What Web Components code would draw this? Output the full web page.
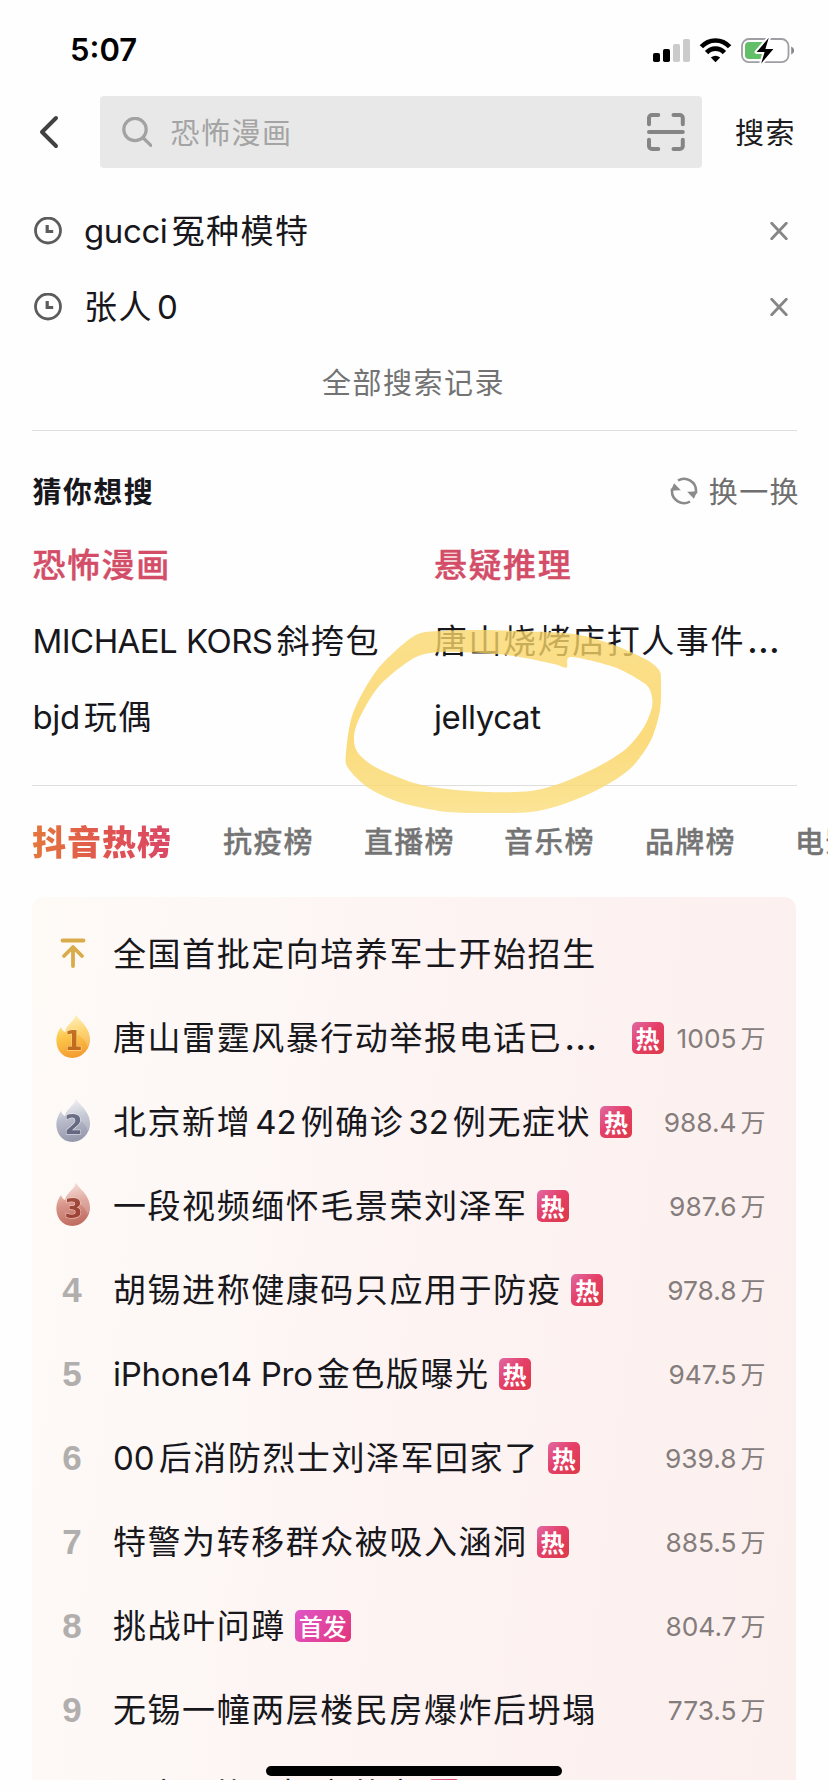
<!DOCTYPE html>
<html lang="zh-CN">
<head>
<meta charset="utf-8">
<title>搜索</title>
<style>
html,body{margin:0;padding:0}
body{width:828px;height:1792px;overflow:hidden;background:#fefefe;color:#17171c;font-family:Inter,"Noto Sans CJK SC",sans-serif}
</style>
</head>
<body>
<search-app></search-app>
<script>
const el = (name, html, setup) => customElements.define(name, class extends HTMLElement {
  constructor(){
    super();
    this.attachShadow({mode:'open'});
  }
  connectedCallback(){
    this.shadowRoot.innerHTML = typeof html === 'function' ? html(this) : html;
    if (setup) setup(this);
  }
});

/* Mixed-script line: Latin runs get their own tracking (attribute "track"). */
el('mixed-text', h => {
  const tracks = (h.getAttribute('track') || '0').split(',');
  let i = 0;
  const runs = h.getAttribute('text').match(/[\x20-\x7e…]+|[^\x20-\x7e…]+/g).map(r => {
    if (!/[\x20-\x7e…]/.test(r)) return `<span>${r}</span>`;
    const t = tracks[Math.min(i++, tracks.length - 1)];
    return `<span class="l ${r === '…' ? 'dots' : ''}" style="letter-spacing:${t}px">${r}</span>`;
  }).join('');
  return `<style>
    :host{display:block;white-space:nowrap;font-size:33px;line-height:48px;letter-spacing:1.550px}
    .l{font-size:var(--latin,33px);line-height:1}
    span+.l{margin-left:var(--gap,4px)} .l+span{margin-left:var(--gap,4px)}
    span+.dots{margin-left:2px;font-size:38px}
  </style>${runs}`;
});

el('status-bar', `<style>
  :host{display:flex;height:96px;box-sizing:border-box;padding:0 34px 0 70px;align-items:center;justify-content:space-between}
  b{font:600 31px/40px Inter;letter-spacing:0;margin-top:3px;color:#000}
  svg{display:block;margin-top:3px}
</style>
<b>5:07</b>
<svg width="142" height="30" viewBox="652 34 142 30">
  <rect x="653" y="52" width="7" height="9" rx="1.800"/>
  <rect x="663" y="48" width="7" height="13" rx="1.800"/>
  <rect x="673" y="43" width="7" height="18" rx="1.800" fill="#cbcbcb"/>
  <rect x="683" y="38" width="7" height="23" rx="1.800" fill="#cbcbcb"/>
  <g fill="none" stroke="#000" stroke-width="4.600">
    <path d="M701.400 45.800a18.800 18.800 0 0 1 28.200 0"/><path d="M706.600 51.600a12 12 0 0 1 17.800 0"/>
  </g>
  <path d="M710.800 56.600q4.700-3.800 9.400 0l-4.700 4.600z"/>
  <rect x="742" y="38" width="46.500" height="23.200" rx="7" fill="#fff" stroke="#9f9ea2" stroke-width="1.800"/>
  <path d="M749 41h15v17h-15a4 4 0 0 1-4-4v-9a4 4 0 0 1 4-4z" fill="#62bf67"/>
  <path d="M791.200 45.600q3 1.400 3 4t-3 4z" fill="#88878b"/>
  <path d="M768.800 36.800L756.600 51h8l-3.400 11.500L773.400 48h-8z" stroke="#fff" stroke-width="4" paint-order="stroke" stroke-linejoin="round"/>
</svg>`);

el('search-bar', `<style>
  :host{display:flex;height:72px;align-items:center}
  .back{width:100px;flex:none}
  .box{width:602px;height:72px;border-radius:4px;background:#e8e8e8;display:flex;align-items:center;box-sizing:border-box;padding:0 16px 0 22px}
  .q{flex:1;margin:-2px 0 0 18.500px;font-size:29px;letter-spacing:1.500px;color:#a4a4a4}
  .go{margin:-2px 0 0 33px;font-size:29px;letter-spacing:1.400px;color:#1b1b20}
  svg{display:block}
</style>
<svg class="back" height="72" viewBox="0 96 100 72" fill="none" stroke="#414141" stroke-width="4" stroke-linecap="round" stroke-linejoin="round"><path d="M56 118L42 132l14 14"/></svg>
<div class="box">
  <svg width="30" height="31" viewBox="122 117 30 31" fill="none" stroke="#a2a2a2" stroke-width="3.200" stroke-linecap="round"><circle cx="135" cy="129.500" r="11.200"/><path d="M143.300 138l7.500 7.300"/></svg>
  <span class="q">恐怖漫画</span>
  <svg width="40" height="40" viewBox="646 112 40 40" fill="none" stroke="#858585" stroke-width="4" stroke-linecap="round"><path d="M649 124.200V118a3 3 0 0 1 3-3h6.300M673.500 115h6.300a3 3 0 0 1 3 3v6.200M649 139.700v6.200a3 3 0 0 0 3 3h6.300M673.500 148.900h6.300a3 3 0 0 0 3-3v-6.200M649 132h33.800"/></svg>
</div>
<span class="go">搜索</span>`);

el('history-item', h => `<style>
  :host{display:flex;height:76px;align-items:center;padding:0 40px 0 34px}
  mixed-text{flex:1;margin-left:22px}
  svg{display:block;flex:none}
</style>
<svg width="28" height="28" viewBox="0 0 28 28" fill="none" stroke="#5c5c5c"><circle cx="14" cy="13.500" r="12.500" stroke-width="2.800"/><path d="M13.200 8v6.500h6" stroke-width="3.200"/></svg>
<mixed-text text="${h.getAttribute('text')}" track="${h.getAttribute('track') || 0}"></mixed-text>
<svg width="18" height="18" viewBox="0 0 18 18" stroke="#868686" stroke-width="2.800" stroke-linecap="round"><path d="M1.700 1.200l14.600 15.600M16.300 1.200L1.700 16.800"/></svg>`);

el('history-list', `<style>
  :host{display:block;height:237px;padding-top:25px;position:relative}
  .all{height:76px;line-height:78px;text-align:center;font-size:29px;letter-spacing:1.500px;color:#737373;margin-right:1px}
  hr{margin:9px 31px 0 32px;border:0;height:1px;background:#dedede}
</style>
<history-item text="gucci冤种模特" track="-.4"></history-item>
<history-item text="张人0"></history-item>
<div class="all">全部搜索记录</div>
<hr>`);

el('guess-panel', `<style>
  :host{display:block;height:329px;padding-top:25px}
  header{display:flex;align-items:center;height:72px;padding:0 28px 0 32.500px;font-size:29px;letter-spacing:1.400px}
  b{flex:1;font-weight:700;margin-top:-2px}
  header span{margin:-2px 0 0 11px;color:#6f6f6f}
  .grid{display:grid;grid-template-columns:401.500px 394px;grid-auto-rows:76px;align-items:center;padding-left:32.500px}
  .hot{color:#d34d68;font-weight:500;-webkit-text-stroke:.4px #d34d68}
  hr{margin:30px 31px 0 32px;border:0;height:1px;background:#dedede}
</style>
<header><b>猜你想搜</b>
<svg width="28" height="28" viewBox="0 0 28 28" fill="none" stroke="#8b8b8b" stroke-width="2.600"><path d="M8 3.500A12 12 0 0 1 26 14.500v2M20 24.500A12 12 0 0 1 2 13.500v-2"/><path d="M18.500 15.300l7.800-.3-2.600 5.800z M9.500 12.700l-7.800.3 2.600-5.800z" fill="#8b8b8b" stroke-width="1.200"/></svg>
<span>换一换</span></header>
<div class="grid">
<mixed-text class="hot" text="恐怖漫画"></mixed-text><mixed-text class="hot" text="悬疑推理"></mixed-text>
<mixed-text text="MICHAEL KORS斜挎包" track="-.55"></mixed-text><mixed-text text="唐山烧烤店打人事件…"></mixed-text>
<mixed-text text="bjd玩偶" track="-.4"></mixed-text><mixed-text text="jellycat" track="-.4"></mixed-text>
</div>
<hr>`);

el('board-tabs', `<style>
  :host{display:flex;box-sizing:border-box;height:113px;padding-bottom:1px;align-items:center;padding-left:32px;white-space:nowrap;overflow:hidden;font-size:29px;letter-spacing:1.300px;color:#747474;font-weight:500;-webkit-text-stroke:.3px #747474}
  span{flex:none;width:141px}
  .on{width:191px;font-size:34px;font-weight:900;letter-spacing:1px;-webkit-text-stroke:0;color:transparent;background:linear-gradient(90deg,#e4783c 0,#e05350 78px,#da4868 140px);-webkit-background-clip:text;background-clip:text}
  .wide{width:150px}
</style>
<span class="on">抖音热榜</span><span>抗疫榜</span><span style="width:140px">直播榜</span><span>音乐榜</span><span class="wide">品牌榜</span><span>电影榜</span>`);

el('rank-mark', h => {
  const n = h.getAttribute('n');
  const pal = {1:['#fff0b0','#fdc84c','#f39a2e','#b95e18'],2:['#f1f2f7','#b9bbcb','#9396aa','#5b5f78'],3:['#f6d9d2','#d9968a','#bf6a5f','#96392c']}[n];
  let body = '';
  if (n === 'top') body = `<svg width="28" height="32" viewBox="0 0 28 32" fill="none" stroke="#d9ac4b" stroke-width="3.800" stroke-linecap="round" stroke-linejoin="round"><path d="M3.500 2.500h21M14 9.500v18.500M5 18l9-9 9 9"/></svg>`;
  else if (pal) body = `<svg class="f" width="36" height="46" viewBox="0 0 36 46">
    <defs><linearGradient id="g" x1=".4" y1="0" x2=".6" y2="1"><stop offset="0" stop-color="${pal[0]}"/><stop offset=".45" stop-color="${pal[1]}"/><stop offset="1" stop-color="${pal[2]}"/></linearGradient></defs>
    <path d="M21 1C24 6 29 9 32 15c4 7 4 16-1 22-7 9-20 9-26 1C0 31 0 21 6 13c1 3 2 4 4 5C11 11 19 8 21 1z" fill="url(#g)"/>
    <path d="M21 1C24 6 29 9 32 15c3 6 3 12 1 18C29 22 22 19 10 18 11 11 19 8 21 1z" fill="#fff" opacity=".2"/>
    <text x="18.500" y="36" text-anchor="middle" font-family="DejaVu Sans" font-weight="700" font-size="26" fill="${pal[3]}" stroke="${pal[0]}" stroke-width="1" paint-order="stroke" opacity=".85">${n}</text></svg>`;
  else body = `<b>${n || ''}</b>`;
  return `<style>:host{display:flex;width:81px;flex:none;justify-content:center;align-items:center}
  svg{display:block}.f{margin:-3px 0 0 0}
  b{font:700 35px/40px "Liberation Sans";color:#b1aeae;margin:-1px 1px 0 0}</style>${body}`;
});

el('heat-badge', `<style>
  :host{display:block;flex:none;height:32px;border-radius:5px;box-sizing:border-box;padding:0 4px;background:linear-gradient(135deg,#e06aa3 0,#e53f68 45%,#dc3a48 100%);color:#fff;font:700 24px/31px "Noto Sans CJK SC"}
  :host([kind=first]){background:linear-gradient(125deg,#e056c8,#e2357c);padding:0 4px;font-weight:500}
</style><slot></slot>`);

el('hot-row', h => {
  const a = n => h.getAttribute(n) || '';
  return `<style>
  :host{display:flex;height:84px;align-items:center;padding-right:30.500px}
  heat-badge{margin-left:9px}
  .far{margin-left:auto}
  .count{margin:1px 0 0 auto;--latin:26.300px;--gap:4px;font-size:25px;letter-spacing:0;color:#857c7c}
  .far+.count{margin-left:13px}
  </style>
  <rank-mark n="${a('n')}"></rank-mark>
  <mixed-text text="${a('text')}" track="${a('track') || 0}"></mixed-text>
  ${a('badge') ? `<heat-badge class="${h.hasAttribute('far') ? 'far' : ''}" ${a('badge') === '首发' ? 'kind="first"' : ''}>${a('badge')}</heat-badge>` : ''}
  ${a('count') ? `<mixed-text class="count" text="${a('count')}万" track="0"></mixed-text>` : ''}`;
});

el('hot-board', `<style>
  :host{display:block;box-sizing:border-box;margin:0 32px;height:883px;overflow:hidden;padding-top:15px;border-radius:12px 12px 0 0;background:linear-gradient(97deg,#fefaf6 0,#fdf8f6 22%,#fdf3f2 52%,#fbf0ee 100%)}
</style>
<hot-row n="top" text="全国首批定向培养军士开始招生"></hot-row>
<hot-row n="1" text="唐山雷霆风暴行动举报电话已…" badge="热" far count="1005"></hot-row>
<hot-row n="2" text="北京新增42例确诊32例无症状" badge="热" count="988.4"></hot-row>
<hot-row n="3" text="一段视频缅怀毛景荣刘泽军" badge="热" count="987.6"></hot-row>
<hot-row n="4" text="胡锡进称健康码只应用于防疫" badge="热" count="978.8"></hot-row>
<hot-row n="5" text="iPhone14 Pro金色版曝光" track="-.25" badge="热" count="947.5"></hot-row>
<hot-row n="6" text="00后消防烈士刘泽军回家了" badge="热" count="939.8"></hot-row>
<hot-row n="7" text="特警为转移群众被吸入涵洞" badge="热" count="885.5"></hot-row>
<hot-row n="8" text="挑战叶问蹲" badge="首发" count="804.7"></hot-row>
<hot-row n="9" text="无锡一幢两层楼民房爆炸后坍塌" count="773.5"></hot-row>
<hot-row n="" text="男方4共一报方共方" badge="热" style="height:86px"></hot-row>`);

/* Hand-drawn highlighter loop, smoothed through its edge points. */
el('marker-loop', `<style>
  :host{position:absolute;left:0;top:0;width:828px;height:900px;pointer-events:none}
  svg{display:block}
</style><svg width="828" height="900"><defs><linearGradient id="y" x1="0" x2="0" y1="630" y2="813" gradientUnits="userSpaceOnUse"><stop offset="0" stop-color="#fad76b"/><stop offset=".6" stop-color="#fad158"/><stop offset="1" stop-color="#fadd78"/></linearGradient></defs><path fill="url(#y)" fill-rule="evenodd" opacity=".78"/></svg>`, h => {
  const outer = [[414,636],[377,670],[353,713],[346,753],[348,768],[367,787],[393,800],[414,806],[447,812],[487,813],[531,812],[564,804],[601,788],[631,768],[651,740],[660,710],[661,680],[659,670],[647,660],[614,645],[574,634],[514,631],[481,630],[441,631]];
  const inner = [[414,658],[380,685],[360,717],[354,737],[358,753],[377,768],[414,783],[447,789],[487,792],[531,791],[564,782],[601,765],[627,748],[644,727],[652,707],[651,693],[644,683],[614,667],[571,657],[566.5,667.5],[554,664],[514,656],[481,653],[441,652]];
  const curve = p => {
    const n = p.length, g = i => p[(i + n) % n];
    let d = `M${p[0]}`;
    for (let i = 0; i < n; i++) {
      const [a, b, c, e] = [g(i - 1), g(i), g(i + 1), g(i + 2)];
      d += `C${b[0] + (c[0] - a[0]) / 7} ${b[1] + (c[1] - a[1]) / 7} ${c[0] - (e[0] - b[0]) / 7} ${c[1] - (e[1] - b[1]) / 7} ${c}`;
    }
    return d + 'Z';
  };
  h.shadowRoot.querySelector('svg > path').setAttribute('d', curve(outer) + curve(inner));
});

el('home-indicator', `<style>
  :host{position:absolute;left:266px;top:1766px;width:296px;height:10px;border-radius:5px;background:#000}
</style>`);

el('search-app', `<style>
  :host{display:block;position:relative;width:828px;height:1792px;overflow:hidden;background:#fefefe}
</style>
<status-bar></status-bar>
<search-bar></search-bar>
<history-list></history-list>
<guess-panel></guess-panel>
<board-tabs></board-tabs>
<hot-board></hot-board>
<marker-loop></marker-loop>
<home-indicator></home-indicator>`);
</script>
</body>
</html>
